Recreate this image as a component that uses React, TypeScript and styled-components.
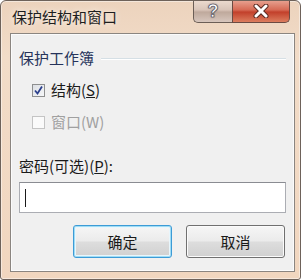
import React from "react";
import styled, { createGlobalStyle } from "styled-components";

const GlobalStyle = createGlobalStyle`
  html, body {
    margin: 0;
    padding: 0;
    background: #ffffff;
  }
  body {
    font-family: "Noto Sans CJK SC", "Microsoft YaHei", sans-serif;
  }
`;

const App: React.FC = () => {
  return (
    <>
      <GlobalStyle />
      <Window>
        <TitleBar>
          <Title>保护结构和窗口</Title>
          <Caption>
            <HelpButton>?</HelpButton>
            <CloseButton>
              <svg width="18" height="14" viewBox="0 0 18 14">
                <path
                  d="M4 2 L14 12 M14 2 L4 12"
                  stroke="#5a2a22"
                  strokeWidth="5"
                  strokeLinecap="round"
                />
                <path
                  d="M4 2 L14 12 M14 2 L4 12"
                  stroke="#ffffff"
                  strokeWidth="3"
                  strokeLinecap="round"
                />
              </svg>
            </CloseButton>
          </Caption>
        </TitleBar>

        <Client>
          <GroupHeader>
            <GroupLabel>保护工作簿</GroupLabel>
            <GroupLine />
          </GroupHeader>

          <CheckList>
            <CheckRow>
              <Box>
                <svg width="11" height="11" viewBox="0 0 11 11">
                  <path
                    d="M2 5.5 L4.5 8.5 L9 1.5"
                    fill="none"
                    stroke="#2b3f8c"
                    strokeWidth="1.8"
                  />
                </svg>
              </Box>
              <CheckLabel>
                结构(<u>S</u>)
              </CheckLabel>
            </CheckRow>

            <CheckRow>
              <Box $disabled />
              <CheckLabel $disabled>窗口(W)</CheckLabel>
            </CheckRow>
          </CheckList>

          <FieldLabel>
            密码(可选)(<u>P</u>):
          </FieldLabel>
          <TextBox>
            <Caret />
          </TextBox>

          <Buttons>
            <Button $default>确定</Button>
            <Button>取消</Button>
          </Buttons>
        </Client>
      </Window>
    </>
  );
};

export default App;

// Styles
const Window = styled.div`
  width: 301px;
  height: 280px;
  box-sizing: border-box;
  border: 1px solid #6e625a;
  border-radius: 6px 6px 3px 3px;
  background: linear-gradient(180deg, #ecd3bd 0%, #f2dcc8 20%, #f1d6bf 100%);
  box-shadow: inset 0 0 0 1px rgba(255, 255, 255, 0.45);
  display: flex;
  flex-direction: column;
  padding: 0 5px 7px 9px;
  overflow: hidden;
`;

const TitleBar = styled.div`
  height: 32px;
  display: flex;
  justify-content: space-between;
  align-items: flex-start;
`;

const Title = styled.div`
  font-size: 15px;
  color: #1e1e1e;
  padding: 7px 0 0 2px;
  line-height: 18px;
  text-shadow: 0 0 6px rgba(255, 255, 255, 0.9);
`;

const Caption = styled.div`
  display: flex;
  margin-top: -1px;
  margin-right: 5px;
`;

const HelpButton = styled.div`
  width: 39px;
  height: 23px;
  box-sizing: border-box;
  border: 1px solid #6b5e56;
  border-top: none;
  border-right: none;
  border-radius: 0 0 0 5px;
  background: linear-gradient(180deg, #eddcd0 0%, #d8c4b8 45%, #bfa99c 55%, #d7c6bd 100%);
  color: #ffffff;
  font-family: "Liberation Sans", Arial, sans-serif;
  font-weight: bold;
  font-size: 18px;
  display: flex;
  align-items: center;
  justify-content: center;
  -webkit-text-stroke: 0.6px #3e4050;
  text-shadow: 0 0 2px #4a4a58;
`;

const CloseButton = styled.div`
  width: 58px;
  height: 23px;
  box-sizing: border-box;
  border: 1px solid #6b4a42;
  border-top: none;
  border-radius: 0 0 5px 0;
  background: linear-gradient(180deg, #e8a594 0%, #d66a55 45%, #c2402b 55%, #dc7d5e 100%);
  display: flex;
  align-items: center;
  justify-content: center;
`;

const Client = styled.div`
  flex: 1;
  background: #f0f0f0;
  border: 1px solid #8b8580;
  box-shadow: inset 0 0 0 1px #fbfbfb;
  padding: 14px 8px 0 8px;
  display: flex;
  flex-direction: column;
`;

const GroupHeader = styled.div`
  display: flex;
  align-items: center;
  height: 20px;
`;

const GroupLabel = styled.div`
  font-size: 15px;
  color: #26335a;
  line-height: 20px;
`;

const GroupLine = styled.div`
  flex: 1;
  height: 1px;
  background: #d5dfe5;
  border-bottom: 1px solid #ffffff;
  margin: 2px 0 0 7px;
`;

const CheckList = styled.div`
  display: flex;
  flex-direction: column;
  padding-top: 6px;
`;

const CheckRow = styled.div`
  display: flex;
  align-items: center;
  height: 32px;
  padding-left: 13px;
`;

const Box = styled.div<{ $disabled?: boolean }>`
  width: 13px;
  height: 13px;
  box-sizing: border-box;
  border: 1px solid ${({ $disabled }) => ($disabled ? "#c4c4c4" : "#8e8f8f")};
  background: ${({ $disabled }) =>
    $disabled ? "#fafafa" : "linear-gradient(135deg, #dcdfe4 0%, #f6f7f8 100%)"};
  display: flex;
  align-items: center;
  justify-content: center;
  margin-right: 6px;
`;

const CheckLabel = styled.div<{ $disabled?: boolean }>`
  font-size: 15px;
  color: ${({ $disabled }) => ($disabled ? "#a0a0a0" : "#1a1a1a")};
  line-height: 20px;
`;

const FieldLabel = styled.div`
  font-size: 15px;
  color: #1a1a1a;
  line-height: 20px;
  margin-top: 18px;
`;

const TextBox = styled.div`
  height: 31px;
  box-sizing: border-box;
  margin-top: 6px;
  border: 1px solid #abadb3;
  border-top-color: #8a8c92;
  background: #ffffff;
  display: flex;
  align-items: center;
  padding-left: 5px;
`;

const Caret = styled.span`
  display: inline-block;
  width: 1px;
  height: 18px;
  background: #1a1a1a;
`;

const Buttons = styled.div`
  display: flex;
  justify-content: flex-end;
  gap: 14px;
  margin-top: 12px;
  padding-right: 1px;
`;

const Button = styled.div<{ $default?: boolean }>`
  width: 99px;
  height: 33px;
  box-sizing: border-box;
  border: 1px solid ${({ $default }) => ($default ? "#3c9bd6" : "#707070")};
  border-radius: 3px;
  background: linear-gradient(180deg, #f6f6f6 0%, #ebebeb 48%, #dddddd 52%, #d0d0d0 100%);
  box-shadow: ${({ $default }) =>
    $default ? "inset 0 0 0 1px #9fdcf5, inset 0 0 0 2px #e8f6fc" : "inset 0 0 0 1px #fbfbfb"};
  font-size: 15px;
  color: #1a1a1a;
  display: flex;
  align-items: center;
  justify-content: center;
`;
